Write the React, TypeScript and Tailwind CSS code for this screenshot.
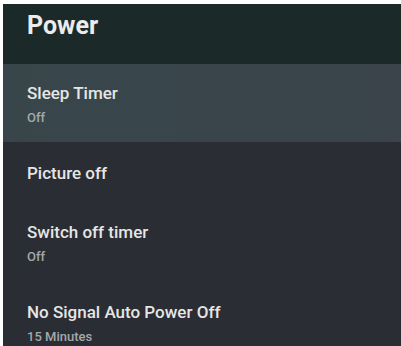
const rows = [
  { title: "Sleep Timer", value: "Off", active: true },
  { title: "Picture off" },
  { title: "Switch off timer", value: "Off" },
  { title: "No Signal Auto Power Off", value: "15 Minutes" },
];

export default function App() {
  return (
    <div className="w-[401px] h-[346px] overflow-hidden bg-white pt-[4px] pl-[3px] font-['Roboto',sans-serif]">
      <div className="h-full bg-[#2b2d34] flex flex-col">
        <div className="h-[60px] shrink-0 bg-[#1c2929] pl-[24px] pt-[7px]">
          <h1 className="text-[25px] leading-[30px] font-bold text-[#ececec]">Power</h1>
        </div>
        {rows.map((row) => (
          <div
            key={row.title}
            className={
              row.active
                ? "h-[78px] shrink-0 pl-[24px] pt-[19px] bg-gradient-to-r from-[#38464a] to-[#3a444a]"
                : row.value
                ? "h-[80px] shrink-0 pl-[24px] pt-[21px]"
                : "h-[59px] shrink-0 pl-[24px] pt-[21px]"
            }
          >
            <div className="text-[17px] leading-[20px] font-medium text-[#e6e6e6]">{row.title}</div>
            {row.value && (
              <div className="mt-[7px] text-[13px] leading-[16px] font-medium text-[#a3a8aa]">{row.value}</div>
            )}
          </div>
        ))}
      </div>
    </div>
  );
}
